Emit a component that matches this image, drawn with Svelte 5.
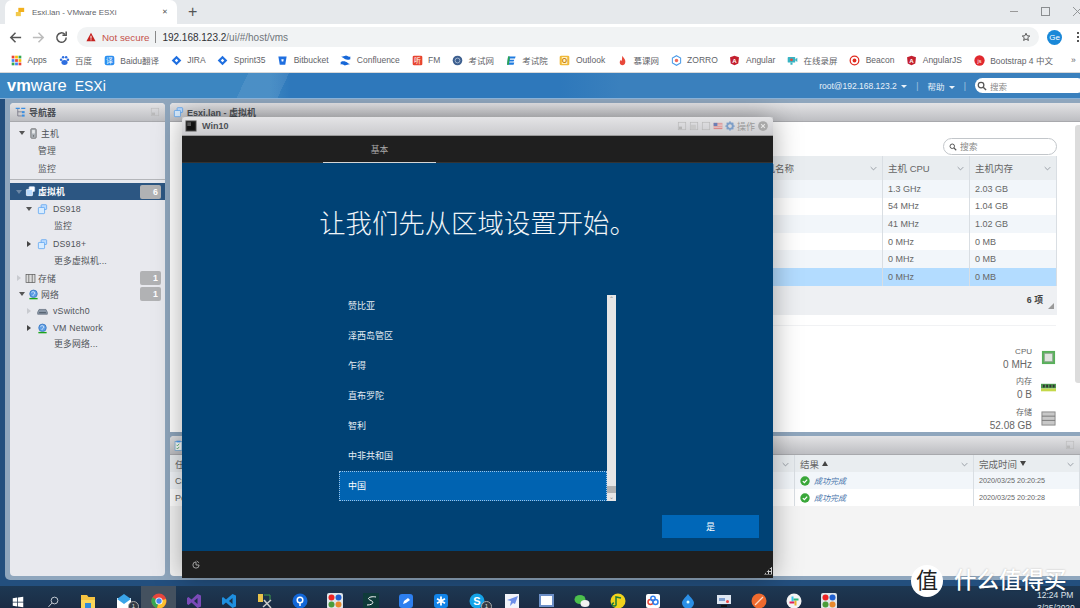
<script>
  const art = {
    apps: [0,1,2].flatMap(r => [0,1,2].map(c => `<rect x="${1+c*5}" y="${1+r*5}" width="4" height="4" fill="${['#ea4335','#fbbc05','#34a853','#4285f4','#ea4335','#fbbc05','#34a853','#4285f4','#ea4335'][r*3+c]}"/>`)).join(''),
    paw: '<ellipse cx="8" cy="11" rx="4.5" ry="3.6" fill="#2f6fe0"/><circle cx="3" cy="7" r="1.8" fill="#2f6fe0"/><circle cx="13" cy="7" r="1.8" fill="#2f6fe0"/><circle cx="6" cy="3.4" r="1.8" fill="#2f6fe0"/><circle cx="10.4" cy="3.4" r="1.8" fill="#2f6fe0"/>',
    fanyi: '<rect x="1" y="1" width="14" height="14" rx="3" fill="#2b8ff0"/><text x="8" y="12" font-size="10" fill="#fff" text-anchor="middle">译</text>',
    jira: '<path d="M8 1l7 7-7 7-7-7z" fill="#1f6fe0"/><path d="M8 5.5L10.5 8 8 10.500 5.500 8z" fill="#fff"/>',
    bit: '<path d="M2 2h12l-2 12H4z" fill="#1f6fe0"/><path d="M6.300 6h3.400l-.5 3.500H6.800z" fill="#fff"/>',
    conf: '<path d="M1 3c4-1 5 6 14 3v-4c-3 2-5-2-7-1zM15 13c-4 1-5-6-14-3v4c3-2 5 2 7 1z" fill="#1667d8"/>',
    fm: '<rect x="1" y="1" width="14" height="14" rx="2" fill="#e8452f"/><text x="8" y="12" font-size="10" fill="#fff" text-anchor="middle">听</text>',
    exam: '<circle cx="8" cy="8" r="7" fill="#3d5f8f"/><circle cx="8" cy="8" r="3.500" fill="none" stroke="#c9d6e6"/>',
    e: '<path d="M3 2h11l-1 3H6L5.500 7H12l-1 2.500H5L4.500 11H12l-1 3H1.500z" fill="#1e7be0"/><path d="M3 2L1.500 14H4l1.500-12z" fill="#2ea84a"/>',
    outlook: '<rect x="1" y="1" width="14" height="14" rx="2" fill="#f0b93a"/><rect x="4" y="3" width="8" height="10" fill="#fff3c6"/><text x="8" y="12" font-size="10" font-weight="700" fill="#c77a00" text-anchor="middle">O</text>',
    flame: '<path d="M8 1c1 3 5 5 4 10-.5 2.500-2 4-4 4s-4-1.500-4-4c0-2 1-3 2-4 0 1 .5 1.500 1 2 .5-2 0-5 1-8z" fill="#e8483a"/>',
    zorro: '<path d="M8 1l6 3.500v7L8 15l-6-3.500v-7z" fill="none" stroke="#4b9be8" stroke-width="1.500"/><circle cx="8" cy="8" r="2.500" fill="#ef6a5a"/>',
    angular: '<path d="M8 1l6.500 2.300-1 9L8 15l-5.500-2.700-1-9z" fill="#c3202f"/><text x="8" y="11.500" font-size="9" font-weight="700" fill="#fff" text-anchor="middle">A</text>',
    rec: '<rect x="1" y="3" width="11" height="8" rx="1" fill="#37b3c3"/><circle cx="6.500" cy="7" r="2" fill="#e8483a"/><path d="M12 6l3-2v6l-3-2zM5 11h3v3H5z" fill="#37b3c3"/>',
    beacon: '<circle cx="8" cy="8" r="6.300" fill="none" stroke="#e02b20" stroke-width="1.800"/><circle cx="8" cy="8" r="2.800" fill="#e02b20"/>',
    boot: '<circle cx="8" cy="8" r="7.500" fill="#e0282e"/><text x="8" y="11" font-size="8" fill="#fff" text-anchor="middle">js</text>',
    host: '<rect x="4" y="1" width="8" height="14" rx="1.500" fill="#aab0b6" stroke="#666"/><rect x="6" y="3" width="4" height="5" fill="#e5e7ea"/><circle cx="8" cy="11.500" r="1" fill="#555"/>',
    vm: '<rect x="6" y="1" width="8" height="7" rx="1" fill="#bcdcff" stroke="#4d9df0"/><rect x="2" y="5" width="9" height="9" rx="1" fill="#d8ecff" stroke="#4d9df0"/>',
    vmw: '<rect x="6" y="1" width="8" height="7" rx="1" fill="#fff" stroke="#cfe4ff"/><rect x="2" y="5" width="9" height="9" rx="1" fill="#b9dbff" stroke="#fff"/>',
    store: '<rect x="1.500" y="2" width="13" height="12" fill="#ddd" stroke="#555"/><path d="M5.500 2v12M10.500 2v12" stroke="#555"/>',
    net: '<circle cx="8" cy="7" r="5.500" fill="#5f9fe6" stroke="#2d6cb8"/><path d="M5 5c2-2 5-1 5 1s-3 2-3 4" stroke="#fff" fill="none"/><rect x="2" y="13" width="12" height="2" fill="#1ca51c"/>',
    vswitch: '<path d="M3 5h10l2 4v3H1V9z" fill="#8b98a8" stroke="#5f6b7a"/><rect x="3" y="9" width="10" height="1.500" fill="#4e5a68"/>',
    nav: '<path d="M1 2h6M9 2h6" stroke="#3b8ee0" stroke-width="2"/><path d="M4 3v10h6M4 7h6" stroke="#667" fill="none"/><rect x="10" y="6" width="4" height="3" fill="#3b8ee0"/><rect x="10" y="11" width="4" height="3" fill="#3b8ee0"/>',
    tasks: '<rect x="3" y="2" width="10" height="13" fill="#fff" stroke="#6aa6d8"/><rect x="5" y="1" width="6" height="2.500" fill="#4d9df0"/><path d="M5 7l1.500 1.500L9 5.500M5 11.500l1.500 1.500L9 10" stroke="#25a244" fill="none"/>',
    win10: '<rect x="1" y="1" width="14" height="14" fill="#222" stroke="#888"/><rect x="3" y="3" width="10" height="10" fill="#111"/><path d="M3 3h5v5H3z" fill="#555"/>',
    gear: '<circle cx="8" cy="8" r="4.500" fill="none" stroke="#7d9ec7" stroke-width="3"/><path d="M8 .5v3M8 12.500v3M.5 8h3M12.500 8h3M2.700 2.700l2 2M11.300 11.300l2 2M13.300 2.700l-2 2M4.700 11.300l-2 2" stroke="#7d9ec7" stroke-width="2"/>',
    flag: '<rect x="1" y="3" width="14" height="10" fill="#d98a8a"/><path d="M1 5h14M1 7.500h14M1 10h14" stroke="#eee"/><rect x="1" y="3" width="6" height="5" fill="#6b7fb5"/>',
    close: '<circle cx="8" cy="8" r="6.500" fill="#a8a8a8"/><path d="M5.500 5.500l5 5M10.500 5.500l-5 5" stroke="#e4e4e4" stroke-width="1.500"/>',
    min: '<rect x="2" y="2" width="12" height="12" fill="none" stroke="#b5b5b5"/><rect x="3" y="9" width="5" height="4" fill="#b5b5b5"/>',
    mid: '<rect x="2" y="2" width="12" height="12" fill="none" stroke="#b5b5b5"/><rect x="3" y="6" width="8" height="7" fill="#c8c8c8"/>',
    max: '<rect x="2" y="2" width="12" height="12" fill="none" stroke="#b5b5b5"/>',
    ok: '<circle cx="8" cy="8" r="7.500" fill="#3aa83a"/><path d="M4.500 8.200l2.500 2.500 4.500-5" stroke="#fff" stroke-width="2" fill="none"/>',
    cpu: '<rect x="1" y="1" width="14" height="14" fill="#58b05a"/><rect x="3.500" y="3.500" width="9" height="9" fill="#dfe3df" stroke="#8aa58a"/>',
    ram: '<rect x="0" y="3" width="16" height="5" fill="#4e9a4e"/><rect x="0" y="8" width="16" height="3" fill="#c4d84a"/><path d="M2 4h2v3H2zM5.500 4h2v3h-2zM9 4h2v3H9zM12.500 4h2v3h-2z" fill="#333"/>',
    disk: '<rect x="1" y="1" width="14" height="14" fill="#c8c8c8" stroke="#888"/><path d="M1 5.500h14M1 10h14" stroke="#777"/>',
    search: '<circle cx="6.500" cy="6.500" r="4.500" fill="none" stroke="#555" stroke-width="2"/><path d="M10 10l4.500 4.500" stroke="#555" stroke-width="2.200"/>',
    power: '<path d="M8 3A5 5 0 1 0 13 8H8z" fill="none" stroke="#bbb" stroke-width="1.300"/><path d="M9 1.500l4 3" stroke="#bbb" stroke-width="1.200"/>',
    tbwin: '<path d="M1 3l6-1v5.500H1zM8 2l7-1v6.500H8zM1 8.500h6V14l-6-1zM8 8.500h7V15l-7-1z" fill="#fff"/>',
    tbsearch: '<circle cx="10" cy="6" r="4.500" fill="none" stroke="#cfd6dc" stroke-width="1.200"/><path d="M6.500 9.500L2 14.500" stroke="#cfd6dc" stroke-width="1.300"/>',
    files: '<path d="M1 2h6l1.500 2H15v11H1z" fill="#f6c341"/><rect x="1" y="7" width="14" height="8" fill="#fbd75b"/><rect x="5" y="10" width="6" height="5" fill="#2e8bdc"/>',
    mail: '<rect x="1" y="5" width="14" height="10" fill="#fff"/><path d="M1 6l7-5 7 5-7 5z" fill="#3aa4e8"/>',
    chrome: '<circle cx="8" cy="8" r="7.500" fill="#e8453c"/><path d="M8 8L1.500 4.200A7.500 7.500 0 0 0 6 15.300z" fill="#35a853"/><path d="M8 8l7 -2A7.500 7.500 0 0 1 6 15.300z" fill="#fbc02d"/><circle cx="8" cy="8" r="3.600" fill="#fff"/><circle cx="8" cy="8" r="2.700" fill="#4285f4"/>',
    vs: '<path d="M11.500 1L15 2.500v11L11.500 15 5.500 9.500 2.500 12 1 11V5l1.500-1 3 2.500z" fill="#7b4bb8"/><path d="M11.500 5L8 8l3.500 3z" fill="#1d3148"/>',
    vscode: '<path d="M11.500 1L15 2.500v11L11.500 15 5 9.500 2 12 1 11V5l1-1 3 2.500z" fill="#1e8fe0"/><path d="M11.500 5L8 8l3.500 3z" fill="#1d3148"/>',
    tools: '<rect x="1" y="1" width="5" height="8" fill="#e8c24a"/><path d="M7 2h6v6" stroke="#3f9b4a" fill="none"/><path d="M6 14l8-7M7 7l7 8" stroke="#ccc" stroke-width="1.500"/>',
    maps: '<circle cx="8" cy="8" r="7.500" fill="#1267d8"/><circle cx="8" cy="7" r="2.800" fill="none" stroke="#fff" stroke-width="1.500"/><path d="M8 10v3" stroke="#fff" stroke-width="1.500"/>',
    dots: '<rect width="16" height="16" rx="2" fill="#dfe6ea"/><circle cx="4.500" cy="4.500" r="3" fill="#e22"/><circle cx="11.500" cy="4.500" r="3" fill="#1f5fd0"/><circle cx="4.500" cy="11.500" r="3" fill="#4a9c3a"/><circle cx="11.500" cy="11.500" r="3" fill="#e8892c"/>',
    sw: '<rect width="16" height="16" fill="#0f3b3a"/><path d="M13 4C8 3 3 5 7 7c5 2 3 5-3 5" stroke="#fff" fill="none"/>',
    note: '<rect x="1" y="1" width="14" height="14" rx="3" fill="#2d7ff0"/><path d="M5 11l1-3 4-3 2 2-4 3z" fill="#fff"/>',
    star: '<rect x="1" y="1" width="14" height="14" rx="3" fill="#1284e8"/><path d="M8 3.500v9M4 5.800l8 4.400M12 5.800l-8 4.400" stroke="#fff" stroke-width="1.800"/>',
    skype: '<circle cx="8" cy="8" r="7.500" fill="#14a3e8"/><text x="8" y="12" font-size="11" font-weight="700" fill="#fff" text-anchor="middle">S</text>',
    feather: '<rect x="1" y="1" width="14" height="14" fill="#f1f3fa"/><path d="M14 3L3 7l4 1-1 5 3-3 2 1z" fill="#6c8de8"/>',
    win: '<rect x="1" y="2" width="13" height="11" fill="#fff" stroke="#6c8fc7" stroke-width="2"/>',
    wechat: '<ellipse cx="6" cy="6.500" rx="5.500" ry="4.500" fill="#4cc04c"/><ellipse cx="11" cy="10.500" rx="4.500" ry="3.500" fill="#f2f2f2"/>',
    music: '<circle cx="8" cy="8" r="7.500" fill="#f0d21c"/><path d="M6 11V4l5 1M6 11a2 1.500 0 1 1-2-1" stroke="#1c7a3a" stroke-width="1.500" fill="none"/>',
    baidu: '<rect x="1" y="1" width="14" height="14" rx="2" fill="#fff"/><circle cx="5.500" cy="9" r="2.500" fill="none" stroke="#e8483a" stroke-width="1.500"/><circle cx="10.500" cy="9" r="2.500" fill="none" stroke="#2d7ff0" stroke-width="1.500"/><circle cx="8" cy="5.500" r="2.200" fill="none" stroke="#2d7ff0" stroke-width="1.500"/>',
    drop: '<path d="M8 1c3 4 6 6 6 9a6 5.500 0 0 1-12 0c0-3 3-5 6-9z" fill="#2b8fe6"/><circle cx="8" cy="9" r="1.500" fill="#dff"/>',
    monitor: '<rect x="1" y="2" width="14" height="9" fill="#dfe7f2"/><rect x="3" y="5" width="6" height="3" fill="#7f9fd0"/><circle cx="11.500" cy="8.500" r="1.500" fill="#e44"/><rect x="5" y="12" width="6" height="2" fill="#111"/>',
    orange: '<circle cx="8" cy="8" r="7.500" fill="#ef6a2e"/><path d="M4 12L12 4" stroke="#ffd9c4" stroke-width="1.300"/>',
    slack: '<circle cx="8" cy="8" r="7.500" fill="#f4f4f4"/><path d="M6.500 3.500v5" stroke="#36c5f0" stroke-width="2"/><path d="M3.500 9.500h5" stroke="#e01e5a" stroke-width="2"/><path d="M9.500 12.500v-5" stroke="#ecb22e" stroke-width="2"/><path d="M12.500 6.500h-5" stroke="#2eb67d" stroke-width="2"/>'
  };

  const marks = [
    ['apps', 'Apps'], ['paw', '百度'], ['fanyi', 'Baidu翻译'], ['jira', 'JIRA'], ['jira', 'Sprint35'],
    ['bit', 'Bitbucket'], ['conf', 'Confluence'], ['fm', 'FM'], ['exam', '考试网'], ['e', '考试院'],
    ['outlook', 'Outlook'], ['flame', '慕课网'], ['zorro', 'ZORRO'], ['angular', 'Angular'], ['rec', '在线录屏'],
    ['beacon', 'Beacon'], ['angular', 'AngularJS'], ['boot', 'Bootstrap 4 中文']
  ];

  // gap = distance to the next row's centre, lvl = indent
  const tree = [
    { text: '主机', icon: 'host', arrow: 'down', lvl: 0, gap: 17 },
    { text: '管理', lvl: 1, gap: 18 },
    { text: '监控', lvl: 1, gap: 15 }
  ];
  const tree2 = [
    { text: 'DS918', icon: 'vm', arrow: 'down', lvl: 1, gap: 16 },
    { text: '监控', lvl: 2, gap: 19 },
    { text: 'DS918+', icon: 'vm', arrow: 'right', lvl: 1, gap: 16 },
    { text: '更多虚拟机...', lvl: 2, gap: 18 },
    { text: '存储', icon: 'store', arrow: 'faint', lvl: 0, gap: 16, count: 1 },
    { text: '网络', icon: 'net', arrow: 'down', lvl: 0, gap: 17, count: 1 },
    { text: 'vSwitch0', icon: 'vswitch', arrow: 'faint', lvl: 1, gap: 17 },
    { text: 'VM Network', icon: 'net', arrow: 'right', lvl: 1, gap: 15 },
    { text: '更多网络...', lvl: 2, gap: 15 }
  ];

  const hosts = [
    ['1.3 GHz', '2.03 GB'], ['54 MHz', '1.04 GB'], ['41 MHz', '1.02 GB'],
    ['0 MHz', '0 MB'], ['0 MHz', '0 MB'], ['0 MHz', '0 MB']
  ];
  const stats = [['CPU', '0 MHz', 'cpu'], ['内存', '0 B', 'ram'], ['存储', '52.08 GB', 'disk']];
  const jobs = [['Create VM', '2020/03/25 20:20:25'], ['Power On VM', '2020/03/25 20:20:28']];
  const regions = ['赞比亚', '泽西岛管区', '乍得', '直布罗陀', '智利', '中非共和国', '中国'];
  const dock = ['tbwin', 'tbsearch', 'files', 'mail', 'chrome', 'vs', 'vscode', 'tools', 'maps', 'dots', 'sw', 'note', 'star', 'skype', 'feather', 'win', 'wechat', 'music', 'baidu', 'drop', 'monitor', 'orange', 'slack', 'dots'];
  const badged = ['mail', 'skype'];
</script>

{#snippet icon(name, cls = 'i11')}
  <svg class={cls} viewBox="0 0 16 16" aria-hidden="true">{@html art[name]}</svg>
{/snippet}

{#snippet chev()}
  <svg class="chev" viewBox="0 0 10 6" aria-hidden="true"><path d="M1 1l4 4 4-4" fill="none" stroke="#8b9198" stroke-width="1.200"/></svg>
{/snippet}

{#snippet treeRow(r)}
  <div class="row lvl{r.lvl}" style:margin-bottom="{r.gap - 15}px">
    <span class="arrow {r.arrow ?? 'none'}"></span>
    {#if r.icon}{@render icon(r.icon)}{/if}
    <span class:plain={!r.icon} class="label">{r.text}</span>
    {#if r.count}<span class="count">{r.count}</span>{/if}
  </div>
{/snippet}

<div class="page">
  <div class="tabstrip">
    <div class="tab">
      <svg class="fav" viewBox="0 0 12 12" aria-hidden="true"><rect x="4" y="1" width="7" height="5" fill="#f2b01e"/><rect x="1" y="6" width="6" height="5" fill="#f2c94c"/></svg>
      <span class="tabtitle">Esxi.lan - VMware ESXi</span>
      <span class="tabx">✕</span>
    </div>
    <span class="newtab">+</span>
    <div class="winbtns">
      <span class="wmin"></span>
      <span class="wmax"></span>
      <svg class="wx" viewBox="0 0 10 10" aria-hidden="true"><path d="M0 0l10 10M10 0L0 10" stroke="#8a8d90"/></svg>
    </div>
  </div>

  <div class="toolbar">
    <svg class="nav" viewBox="0 0 16 16" aria-hidden="true"><path d="M14 8H3M8 3L3 8l5 5" fill="none" stroke="#555" stroke-width="1.600"/></svg>
    <svg class="nav" viewBox="0 0 16 16" aria-hidden="true"><path d="M2 8h11M8 3l5 5-5 5" fill="none" stroke="#bcbcbc" stroke-width="1.600"/></svg>
    <svg class="nav" viewBox="0 0 16 16" aria-hidden="true"><path d="M13 8a5 5 0 1 1-1.500-3.500M13 1.500v4H9" fill="none" stroke="#555" stroke-width="1.600"/></svg>
    <div class="omni">
      <svg class="warn" viewBox="0 0 12 12" aria-hidden="true"><path d="M6 1l5.500 10H.5z" fill="#c5221f"/><rect x="5.400" y="4.500" width="1.200" height="3.500" fill="#fff"/><rect x="5.400" y="8.800" width="1.200" height="1.200" fill="#fff"/></svg>
      <span class="insecure">Not secure</span>
      <span class="sep"></span>
      <span class="url"><b>192.168.123.2</b>/ui/#/host/vms</span>
      <svg class="bookstar" viewBox="0 0 16 16" aria-hidden="true"><path d="M8 2l1.800 4 4.200.4-3.200 2.800 1 4.300L8 11.200 4.200 13.500l1-4.300L2 6.400 6.200 6z" fill="none" stroke="#444" stroke-width="1.400"/></svg>
    </div>
    <span class="avatar">Ge</span>
    <span class="kebab"></span>
  </div>

  <div class="bookmarks">
    {#each marks as [ic, text]}
      <span class="mark">{@render icon(ic)}{text}</span>
    {/each}
    <span class="more">»</span>
  </div>

  <header class="esx">
    <div class="logo"><b>vm</b>ware<span class="product">ESXi</span></div>
    <div class="account">
      <span>root@192.168.123.2 <i class="caret"></i></span>
      <span class="bar">|</span>
      <span>帮助 <i class="caret"></i></span>
      <span class="bar">|</span>
      <div class="topsearch">{@render icon('search', 'i10')}<span>搜索</span></div>
    </div>
  </header>

  <div class="desk">
    <div class="frame">
      <aside class="navpane">
        <div class="phead">{@render icon('nav')}<span>导航器</span>{@render icon('min', 'i10 pin')}</div>
        <div class="group">
          {#each tree as r}{@render treeRow(r)}{/each}
        </div>
        <div class="selected">
          <span class="arrow downw"></span>
          {@render icon('vmw')}
          <span class="label">虚拟机</span>
          <span class="count">6</span>
        </div>
        <div class="group2">
          {#each tree2 as r}{@render treeRow(r)}{/each}
        </div>
      </aside>

      <main class="panels">
        <section class="hostpanel">
          <div class="phead">{@render icon('vm')}<span>Esxi.lan - 虚拟机</span></div>
          <div class="hostbody">
            <div class="scroller">
              <div class="searchline">
                <div class="tablesearch">{@render icon('search', 'i8')}<span>搜索</span></div>
              </div>
              <div class="grid hostgrid thead">
                <span class="namecol">主机名称{@render chev()}</span>
                <span>主机 CPU{@render chev()}</span>
                <span>主机内存{@render chev()}</span>
              </div>
              {#each hosts as [cpu, mem], i}
                <div class="grid hostgrid trow" class:zebra={i % 2 === 0} class:picked={i === 5}>
                  <span class="namecol">Esxi</span>
                  <span>{cpu}</span>
                  <span>{mem}</span>
                </div>
              {/each}
              <div class="tfoot"><b>6 项</b><span class="grip"></span></div>
              <div class="stats">
                {#each stats as [name, value, ic]}
                  <div class="stat">
                    <div class="figures"><small>{name}</small><span>{value}</span></div>
                    {@render icon(ic, 'i15')}
                  </div>
                {/each}
              </div>
            </div>
            <div class="vbar"></div>
          </div>
        </section>

        <section class="taskpanel">
          <div class="phead">{@render icon('tasks')}{@render icon('min', 'i10 pin')}</div>
          <div class="grid taskgrid thead big">
            <span>任务{@render chev()}</span>
            <span>结果 <i class="up"></i>{@render chev()}</span>
            <span>完成时间 <i class="down"></i>{@render chev()}</span>
          </div>
          {#each jobs as [job, done], i}
            <div class="grid taskgrid trow" class:zebra={i === 0}>
              <span>{job}</span>
              <span class="result">{@render icon('ok', 'i10')}<em>成功完成</em></span>
              <span>{done}</span>
            </div>
          {/each}
        </section>
      </main>
    </div>

    <!-- the VM console floats over the content like a desktop window -->
    <div class="console">
      <div class="ctitle">
        {@render icon('win10', 'i12')}
        <span class="cname">Win10</span>
        <div class="ctools">
          {@render icon('min', 'i10')}{@render icon('mid', 'i10')}{@render icon('max', 'i10')}{@render icon('flag', 'i10')}{@render icon('gear', 'i10')}
          <span>操作</span>
          {@render icon('close', 'i12')}
        </div>
      </div>
      <div class="oobetop"><span class="oobetab">基本</span></div>
      <div class="oobe">
        <h1>让我们先从区域设置开始。</h1>
        <div class="picker">
          <ul>
            {#each regions as region, i}
              <li class:current={i === regions.length - 1}>{region}</li>
            {/each}
          </ul>
          <div class="pickbar"><span>⌃</span><i></i><span>⌄</span></div>
        </div>
        <div class="actions"><button>是</button></div>
      </div>
      <div class="oobebottom">{@render icon('power', 'i10')}<span class="dotgrip"></span></div>
    </div>
  </div>

  <footer class="taskbar">
    {#each dock as d, i}
      <span class="dockitem" class:active={i === 4}>
        {@render icon(d, i < 2 ? 'i12 lowered' : 'i16')}
        {#if badged.includes(d)}<span class="badge">1</span>{/if}
      </span>
    {/each}
    <div class="clock"><span>12:24 PM</span><span>3/25/2020</span></div>
  </footer>

  <div class="watermark">
    <span class="wmcircle">值</span>
    <span class="wmtext">什么值得买</span>
  </div>
</div>

<style>
  :global(body) { margin: 0; background: #fff; }
  .page {
    position: relative;
    width: 1080px;
    height: 608px;
    overflow: hidden;
    display: flex;
    flex-direction: column;
    font-family: "Liberation Sans", "Noto Sans CJK SC", sans-serif;
    color: #555;
  }
  svg { display: block; flex: none; }
  .i8 { width: 8px; height: 8px; }
  .i10 { width: 10px; height: 10px; }
  .i11 { width: 11px; height: 11px; }
  .i12 { width: 12px; height: 12px; }
  .i15 { width: 15px; height: 15px; }
  .i16 { width: 16px; height: 16px; }

  /* browser */
  .tabstrip { height: 24px; background: #e6e9ec; display: flex; align-items: flex-end; padding-left: 5px; flex: none; }
  .tab { width: 172px; height: 24px; background: #fff; border-radius: 7px 7px 0 0; display: flex; align-items: center; box-sizing: border-box; padding: 0 9px 0 10px; }
  .fav { width: 10px; height: 10px; margin-right: 7px; }
  .tabtitle { font-size: 8px; color: #5f6368; flex: 1; white-space: nowrap; }
  .tabx { font-size: 7px; color: #555; }
  .newtab { font-size: 16px; color: #555; margin-left: 11px; height: 24px; line-height: 23px; }
  .winbtns { margin-left: auto; display: flex; align-items: center; height: 22px; align-self: flex-start; gap: 23px; transform: translateX(2px); }
  .wmin { width: 8px; height: 1px; background: #999; }
  .wmax { width: 7px; height: 7px; border: 1px solid #8a8d90; }
  .wx { width: 9px; height: 9px; }

  .toolbar { height: 24px; background: #fff; display: flex; align-items: center; padding: 2px 0 0 8px; box-sizing: border-box; flex: none; }
  .nav { width: 15px; height: 15px; margin-right: 8px; }
  .omni { width: 962px; height: 20px; border-radius: 10px; background: #f1f3f4; display: flex; align-items: center; box-sizing: border-box; padding: 0 8px 0 9px; }
  .warn { width: 10px; height: 10px; margin-right: 6px; }
  .insecure { font-size: 9.800px; color: #c5524a; }
  .sep { width: 1px; height: 12px; background: #888; margin: 0 6px; }
  .url { font-size: 10px; color: #70757a; flex: 1; }
  .url b { font-weight: 400; color: #303134; }
  .bookstar { width: 10px; height: 10px; }
  .avatar { margin-left: 8px; width: 15px; height: 15px; border-radius: 50%; background: #1a88d8; color: #fff; font-size: 8px; line-height: 15px; text-align: center; }
  .kebab { margin-left: 15px; width: 2px; height: 2px; background: #555; box-shadow: 0 -4px #555, 0 4px #555; }

  .bookmarks { height: 25px; background: #fff; border-bottom: 1px solid #d8d8d8; box-sizing: border-box; display: flex; align-items: center; gap: 11.700px; padding-left: 11px; font-size: 8.500px; color: #5f6368; white-space: nowrap; flex: none; }
  .mark { display: flex; align-items: center; gap: 5.500px; }
  .more { position: absolute; left: 1071px; }

  /* vmware header */
  .esx {
    height: 25px;
    flex: none;
    display: flex;
    align-items: center;
    justify-content: space-between;
    padding-left: 7px;
    color: #fff;
    background:
      linear-gradient(115deg, transparent 0 225px, rgba(255,255,255,.08) 225px 262px, transparent 262px),
      linear-gradient(90deg, #3c86c1 0 270px, #2e78bb 290px 560px, #3a80bd 620px);
  }
  .logo { font-size: 16.500px; display: flex; align-items: baseline; }
  .logo b { font-weight: 700; }
  .product { margin-left: 8px; font-size: 14px; }
  .account { display: flex; align-items: center; gap: 9px; font-size: 8.500px; color: #e8f1f9; }
  .caret { display: inline-block; border: 3px solid transparent; border-top: 3.500px solid #eaf2f9; border-bottom: 0; margin: 0 0 1px 2px; }
  .bar { opacity: .6; }
  .topsearch { width: 110px; height: 15px; margin-right: -5px; background: #fff; border-radius: 8px; display: flex; align-items: center; gap: 3px; padding-left: 2px; box-sizing: border-box; color: #888; }

  /* workspace */
  .desk { position: relative; height: 488px; flex: none; background: #234f7e; overflow: hidden; border-top: 1px solid #8ab1d6; box-sizing: border-box; }
  .frame { margin-left: 5px; height: 481px; background: #8fa6bd; border-bottom-left-radius: 5px; display: flex; gap: 5px; padding: 4px 0 4px 5px; box-sizing: border-box; }
  .navpane { width: 155px; flex: none; background: #e8e9ee; border-radius: 4px; overflow: hidden; }
  .phead { height: 19px; display: flex; align-items: center; gap: 3px; padding: 0 5px; font-size: 9px; font-weight: 700; color: #4b4f55; background: linear-gradient(#e3e3e5, #bdbec2); border-bottom: 1px solid #a8a9ad; box-sizing: border-box; }
  .panels .phead { padding: 0 5px 0 3px; }
  .pin { margin-left: auto; opacity: .8; }
  .group { height: 58px; padding-top: 3.500px; box-sizing: border-box; border-bottom: 1px solid #b4b6ba; overflow: hidden; }
  .row { height: 15px; display: flex; align-items: center; font-size: 8.800px; color: #505459; box-sizing: border-box; padding-right: 4px; }
  .lvl0, .lvl1 { padding-left: 6px; }
  .arrow { width: 0; height: 0; margin-right: 3px; border: 3px solid transparent; flex: none; box-sizing: content-box; }
  .arrow.none { display: none; }
  .arrow.down { border-top: 4px solid #555; border-bottom: 0; }
  .arrow.right { border-left: 4px solid #444; border-right: 0; margin-left: 1px; margin-right: 4px; }
  .arrow.faint { border-left: 4px solid #c9cbd0; border-right: 0; margin-left: 1px; margin-right: 4px; }
  .arrow.downw { border-top: 4px solid #6d88a6; border-bottom: 0; }
  .row.lvl1 .arrow { margin-left: 10px; margin-right: 5px; }
  .row.lvl1 .arrow.right, .row.lvl1 .arrow.faint { margin-left: 11px; margin-right: 6px; }
  .label { margin-left: 2px; white-space: nowrap; letter-spacing: .2px; }
  .row.lvl1 .label { margin-left: 5px; }
  .row.lvl1 .label.plain { margin-left: 22px; }
  .row.lvl2 .label.plain { margin-left: 44px; }
  .count { margin-left: auto; width: 21px; height: 14px; line-height: 14px; border-radius: 2px; background: #b1b2b4; color: #fff; text-align: right; padding-right: 3px; box-sizing: border-box; font-weight: 700; }
  .selected { height: 17px; margin-top: 3px; background: #2c5682; display: flex; align-items: center; padding: 0 4px 0 6px; color: #fff; font-size: 8.800px; font-weight: 700; }
  .group2 { padding-top: 1.500px; }

  .panels { flex: 1; min-width: 0; display: flex; flex-direction: column; gap: 4px; }
  .hostpanel { height: 329px; flex: none; background: #fff; border-radius: 4px 0 0 0; overflow: hidden; }
  .hostbody { display: flex; }
  .scroller { flex: 1; min-width: 0; padding-left: 586px; padding-right: 18px; box-sizing: border-box; }
  .vbar { width: 5px; height: 258px; margin-top: 3px; background: #dcdcdc; border-radius: 3px 0 0 3px; flex: none; }
  .searchline { height: 34px; display: flex; justify-content: flex-end; align-items: flex-end; padding-bottom: 1px; box-sizing: border-box; }
  .tablesearch { width: 114px; height: 17px; border: 1px solid #c2c6ca; border-radius: 9px; box-sizing: border-box; display: flex; align-items: center; gap: 3px; padding-left: 5px; font-size: 8.800px; color: #888; }

  .grid { display: grid; align-items: center; font-size: 9px; color: #666; }
  .hostgrid { grid-template-columns: 127px 87px 1fr; }
  .grid > span { height: 100%; display: flex; align-items: center; padding-left: 5px; box-sizing: border-box; border-right: 1px solid #d9dee3; white-space: nowrap; position: relative; }
  .hostgrid > .namecol { padding-left: 0; }
  .thead { height: 24px; background: #e9edf0; font-size: 9.500px; }
  .trow { height: 17.600px; background: #fff; }
  .zebra { background: #f2f6fa; }
  .picked { background: #b3dcff; }
  .chev { width: 7px; height: 5px; position: absolute; right: 5px; top: 50%; margin-top: -2px; }
  .tfoot { height: 29px; background: #eef0f3; display: flex; align-items: center; justify-content: flex-end; padding-right: 14px; font-size: 8.800px; color: #444; position: relative; }
  .tfoot b { margin-bottom: 2px; }
  .grip { position: absolute; right: 3px; bottom: 6px; border: 3px solid transparent; border-right-color: #999; border-bottom-color: #999; }
  .stats { margin-top: 10px; border-top: 1px solid #f1f2f4; padding-top: 19px; display: flex; flex-direction: column; gap: 4.500px; margin-right: 1px; }
  .stat { display: flex; justify-content: flex-end; align-items: center; gap: 9px; height: 26px; }
  .figures { display: flex; flex-direction: column; align-items: flex-end; font-size: 10px; color: #666; line-height: 13px; }
  .figures small { font-size: 8px; }

  .taskpanel { flex: 1; background: #f4f4f4; border-radius: 4px 0 0 4px; overflow: hidden; }
  .taskgrid { grid-template-columns: 625px 179px 1fr; }
  .big { height: 17px; }
  .trow.taskgrid { height: 17px; }
  .taskgrid em { color: #3f6fa8; font-size: 8px; margin-left: 4px; }
  .up, .down { display: inline-block; border: 3px solid transparent; margin-left: 3px; }
  .up { border-bottom: 5px solid #444; border-top: 0; }
  .down { border-top: 5px solid #444; border-bottom: 0; }
  .taskgrid.trow { font-size: 7.200px; }
  .taskgrid.trow > span:first-child { font-size: 9px; }

  /* console window */
  .console { position: absolute; left: 182px; top: 18px; width: 591px; height: 461px; display: flex; flex-direction: column; box-shadow: 0 0 26px rgba(0,0,0,.34); }
  .ctitle { height: 19px; flex: none; display: flex; align-items: center; padding-left: 3px; gap: 5px; border-radius: 4px 4px 0 0; background: linear-gradient(#e4e4e6, #cbcbce); font-size: 9px; font-weight: 700; color: #4b4f55; border-bottom: 1px solid #999; box-sizing: border-box; }
  .ctools { margin-left: auto; display: flex; align-items: center; gap: 2px; padding-right: 4px; font-weight: 400; color: #9a9a9a; }
  .oobetop { height: 27px; flex: none; background: #1f1f1f; box-sizing: border-box; padding-left: 141px; border-bottom: 1px solid #333; }
  .oobetab { display: block; width: 113px; height: 27px; box-sizing: border-box; border-bottom: 1px solid #d5d5d5; text-align: center; color: #a8a8a8; font-size: 8.800px; line-height: 28px; }
  .oobe { flex: 1; background: #004275; display: flex; flex-direction: column; align-items: center; color: #fff; }
  h1 { margin: 44px 0 0; font-size: 26.400px; line-height: 34px; font-weight: 300; white-space: nowrap; color: #f1f5f8; }
  .picker { margin-top: 54px; width: 277px; height: 206px; display: flex; align-self: flex-start; margin-left: 157px; }
  ul { list-style: none; margin: 0; padding: 0; flex: 1; display: flex; flex-direction: column; justify-content: flex-end; font-size: 9px; color: #e6edf3; }
  li { height: 30px; line-height: 31px; padding-left: 9px; box-sizing: border-box; }
  li.current { background: #0063b1; outline: 1px dotted #9cc3e6; outline-offset: -1px; color: #fff; }
  .pickbar { width: 9px; background: #e6e6e6; display: flex; flex-direction: column; align-items: center; font-size: 6px; line-height: 8px; color: #888; }
  .pickbar i { margin-top: auto; width: 100%; height: 7px; background: #b2b2b2; }
  .actions { align-self: flex-end; margin: 14px 14px 0 0; }
  button { width: 97px; height: 23px; border: 0; background: #0067b8; color: #fff; font: 9px "Liberation Sans", "Noto Sans CJK SC", sans-serif; }
  .oobebottom { height: 27px; flex: none; background: #1f1f1f; display: flex; align-items: center; padding-left: 9px; justify-content: space-between; }
  .dotgrip { width: 8px; height: 8px; margin: 12px 1px 0 0; background: radial-gradient(circle, #ccc 0 1px, transparent 1.200px) 0 0/3px 3px; clip-path: polygon(100% 0, 100% 100%, 0 100%); }

  /* taskbar */
  .taskbar { height: 22px; flex: none; background: linear-gradient(#1d3853, #1b2c44); display: flex; position: relative; overflow: hidden; }
  .dockitem { width: 35.300px; height: 100%; flex: none; display: flex; justify-content: center; box-sizing: border-box; padding-top: 7px; position: relative; }
  .lowered { margin-top: 3px; }
  .badge { position: absolute; left: 22px; top: 15px; width: 9px; height: 9px; border-radius: 50%; background: #333a44; border: 1px solid #aaa; color: #ddd; font-size: 6px; line-height: 9px; text-align: center; }
  .active { background: #44515f; }
  .clock { position: absolute; left: 1037px; top: 3px; width: 43px; font-size: 8.500px; line-height: 13px; color: #dfe4ea; white-space: nowrap; display: flex; flex-direction: column; }

  .watermark { position: absolute; left: 911px; top: 565px; display: flex; align-items: center; gap: 11px; }
  .wmcircle { width: 32px; height: 32px; border-radius: 50%; background: #fff; color: #222; font-size: 22px; line-height: 31px; text-align: center; }
  .wmtext { color: #fff; font-size: 22.500px; line-height: 32px; font-weight: 500; text-shadow: 0 0 2px rgba(0,0,0,.25); }
</style>
